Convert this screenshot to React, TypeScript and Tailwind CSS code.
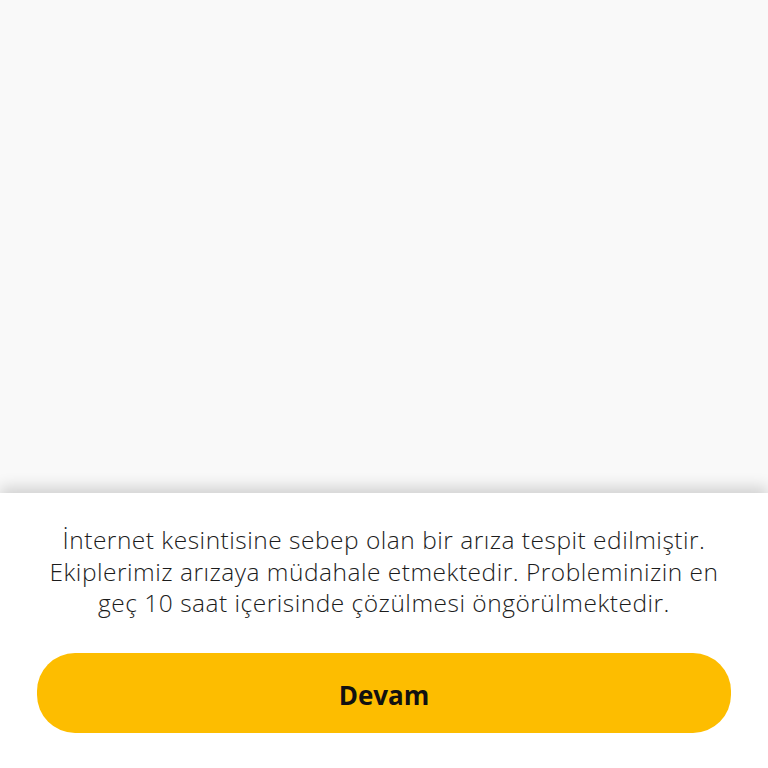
export default function App() {
  return (
    <div
      className="flex h-[768px] w-full flex-col overflow-hidden bg-[#f9f9f9]"
      style={{ fontFamily: '"Open Sans", "Noto Sans", sans-serif' }}
    >
      {/* empty page behind the sheet */}
      <div className="h-[493px] shrink-0" />

      <div className="relative flex flex-1 flex-col items-center bg-white px-[37px] pt-[31px] shadow-[0_-6px_14px_rgba(0,0,0,0.16)]">
        <p className="whitespace-nowrap text-center text-[24.5px] font-light leading-[31.5px] tracking-[0.5px] text-[#1c1c1c]">
          İnternet kesintisine sebep olan bir arıza tespit edilmiştir.
          <br />
          Ekiplerimiz arızaya müdahale etmektedir. Probleminizin en
          <br />
          geç 10 saat içerisinde çözülmesi öngörülmektedir.
        </p>

        <button className="mt-[34px] flex h-[80px] w-full items-center justify-center rounded-[38px] bg-[#fdbd00] pt-[6px] text-[26px] font-bold text-[#111]">
          Devam
        </button>
      </div>
    </div>
  )
}
